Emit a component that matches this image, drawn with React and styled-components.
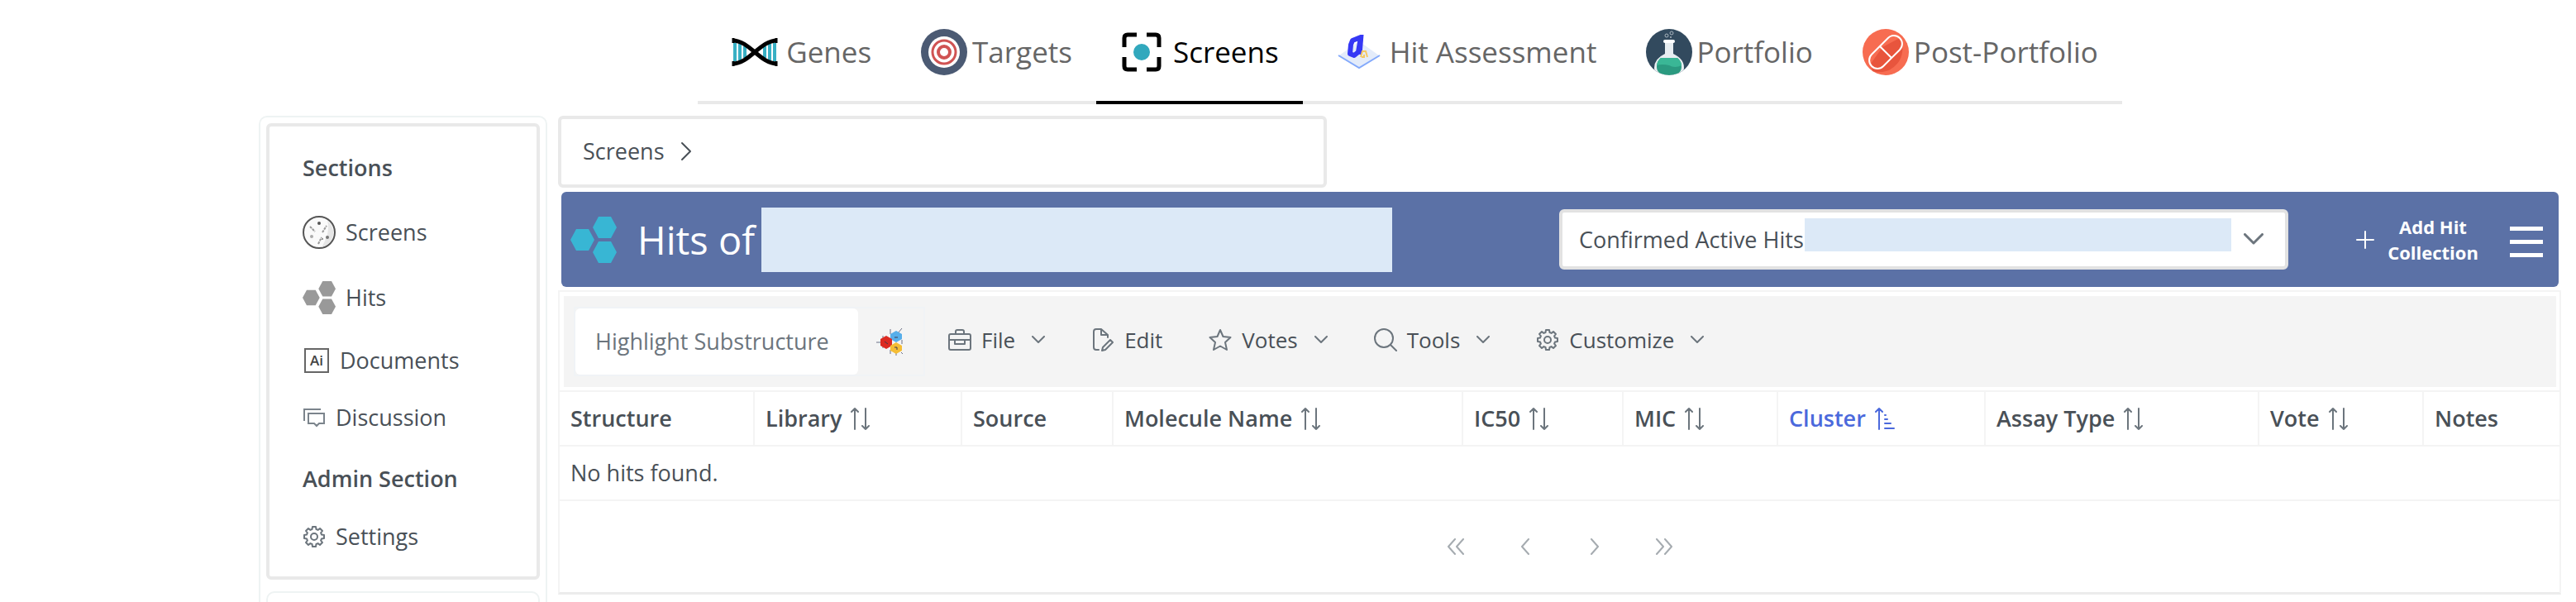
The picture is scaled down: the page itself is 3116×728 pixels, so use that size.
import React from "react";
import styled, { createGlobalStyle } from "styled-components";

const GlobalStyle = createGlobalStyle`
  * { box-sizing: border-box; }
  body {
    margin: 0;
    background: #fff;
    color: #495057;
    font-family: "Open Sans", "Noto Sans", sans-serif;
    font-size: 27px;
    line-height: 40px;
  }
  button, input, select { font: inherit; color: inherit; }
`;

const Page = styled.div`
  display: flex;
  flex-direction: column;
  min-height: 100vh;
  padding: 0 18px 0 313px;
`;

const TabBar = styled.nav`
  display: flex;
  justify-content: center;
  margin-bottom: 14px;
`;

const Tab = styled.a`
  display: flex;
  align-items: center;
  height: 126px;
  padding: 4px 29px 0 31px;
  border-bottom: 4px solid ${(p) => (p.$active ? "#000" : "#e9e9e9")};
  color: ${(p) => (p.$active ? "#000" : "#666")};
  font-size: 35px;
  line-height: 48px;
  text-decoration: none;
  white-space: nowrap;
`;

const TabIcon = styled.span`
  display: flex;
  justify-content: ${(p) => (p.$center ? "center" : "flex-start")};
  width: ${(p) => p.$width}px;
`;

const Body = styled.div`
  display: flex;
  flex: 1;
  align-items: stretch;
  gap: 13px;
`;

const Sidebar = styled.aside`
  display: flex;
  flex: none;
  flex-direction: column;
  gap: 14px;
  width: 349px;
  padding: 7px 7px 0;
  border: 2px solid #eef3f3;
  border-bottom: 0;
  border-radius: 10px 10px 0 0;
`;

const MenuCard = styled.div`
  display: flex;
  flex-direction: column;
  gap: 4px;
  padding: 12px 40px 16px;
  border: 4px solid #e9e9e9;
  border-radius: 6px;
`;

const MenuGroup = styled.section``;

const NextCard = styled.div`
  flex: 1;
  min-height: 12px;
  border: 2px solid #eef3f3;
  border-bottom: 0;
  border-radius: 10px 10px 0 0;
`;

const MenuHeading = styled.h2`
  display: flex;
  align-items: center;
  height: 76px;
  margin: 0;
  font-size: 27px;
  font-weight: 600;
`;

const rowHeights = { large: 79, medium: 74, small: 64 };

const MenuLink = styled.a`
  display: flex;
  align-items: center;
  gap: 12px;
  height: ${(p) => rowHeights[p.$size]}px;
  color: inherit;
  text-decoration: none;
`;

const Main = styled.main`
  flex: 1;
  min-width: 0;
`;

const Breadcrumb = styled.nav`
  display: flex;
  align-items: center;
  gap: 18px;
  width: 100%;
  max-width: 930px;
  height: 87px;
  padding: 0 26px 2px;
  border: 4px solid #e9e9e9;
  border-radius: 6px;
`;

const CrumbLink = styled.a`
  color: inherit;
  text-decoration: none;
`;

const TitleBar = styled.header`
  display: flex;
  align-items: center;
  height: 115px;
  margin: 5px 3px 4px 4px;
  padding: 0 19px 0 11px;
  border-radius: 6px;
  background: #5b71a6;
  color: #fff;
`;

const Title = styled.h1`
  flex: 1;
  display: flex;
  align-items: center;
  gap: 8px;
  margin: 0 0 0 25px;
  font-size: 47px;
  font-weight: 400;
  line-height: 64px;
  white-space: nowrap;
`;

const TitleValue = styled.span`
  width: 763px;
  height: 78px;
  background: #dce9f7;
`;

const SelectBox = styled.div`
  position: relative;
  width: 882px;
  height: 73px;
`;

const Select = styled.select`
  width: 100%;
  height: 100%;
  padding: 0 20px;
  border: 4px solid #e2e2e2;
  border-radius: 6px;
  background: #fff;
  color: #495057;
  appearance: none;
`;

const SelectValue = styled.span`
  position: absolute;
  top: 11px;
  right: 69px;
  width: 516px;
  height: 40px;
  background: #dce9f7;
  pointer-events: none;
`;

const SelectArrow = styled.span`
  position: absolute;
  top: 0;
  right: 30px;
  display: flex;
  align-items: center;
  height: 100%;
  color: #6c757d;
  pointer-events: none;
`;

const AddButton = styled.button`
  display: flex;
  align-items: center;
  gap: 16px;
  margin: 0 38px 0 82px;
  padding: 0;
  border: 0;
  background: none;
  color: #fff;
  font-size: 22px;
  font-weight: 700;
  line-height: 31px;
`;

const AddLabel = styled.span`
  width: 110px;
  text-align: center;
`;

const MenuButton = styled.button`
  display: flex;
  padding: 0;
  border: 0;
  background: none;
  color: #fff;
`;

const Panel = styled.section`
  border: 2px solid #f4f4f4;
  border-bottom: 3px solid #ececec;
`;

const Toolbar = styled.div`
  display: flex;
  align-items: center;
  height: 110px;
  margin: 5px 4px 4px 5px;
  padding: 0 12px;
  background: #f4f4f4;
`;

const SearchGroup = styled.div`
  display: flex;
  align-items: stretch;
  height: 84px;
  border: 2px solid #f0f3f6;
`;

const SearchInput = styled.input`
  width: 342px;
  padding: 0 24px;
  border: 0;
  border-radius: 6px;
  background: #fff;
  &::placeholder { color: #6c757d; opacity: 1; }
`;

const StructureButton = styled.button`
  display: flex;
  align-items: center;
  justify-content: center;
  width: 79px;
  padding: 0 4px 0 0;
  border: 0;
  background: none;
`;

const ToolButton = styled.button`
  display: flex;
  align-items: center;
  gap: 12px;
  padding: 0 28px 4px;
  border: 0;
  background: none;
  font-size: 26px;
  svg { color: #6c757d; }
`;

const ToolArrow = styled.span`
  display: flex;
  padding-left: 8px;
`;

const Table = styled.table`
  width: 100%;
  table-layout: fixed;
  border-collapse: separate;
  border-spacing: 0;
`;

const HeadCell = styled.th`
  width: ${(p) => p.$width}px;
  height: 68px;
  padding: 0 13px;
  border-top: 2px solid #f4f4f4;
  border-bottom: 2px solid #f4f4f4;
  border-right: ${(p) => (p.$last ? 0 : 2)}px solid #f4f4f4;
  color: ${(p) => (p.$sorted ? "#4b69dc" : "#495057")};
  font-weight: 600;
  text-align: left;
  white-space: nowrap;
`;

const HeadLabel = styled.span`
  display: flex;
  align-items: center;
  gap: 8px;
  svg { color: ${(p) => (p.$sorted ? "#4b69dc" : "#6c757d")}; }
`;

const EmptyCell = styled.td`
  height: 66px;
  padding: 0 13px;
  border-bottom: 2px solid #f4f4f4;
`;

const Paginator = styled.div`
  display: flex;
  align-items: center;
  justify-content: center;
  height: 110px;
`;

const PageButton = styled.button`
  display: flex;
  align-items: center;
  justify-content: center;
  width: 84px;
  height: 84px;
  padding: 0;
  border: 0;
  background: none;
  color: #a5abb0;
`;

const Line = ({ w, h, box, sw = 2, children }) => (
  <svg width={w} height={h} viewBox={box || `0 0 ${w} ${h}`} fill="none" stroke="currentColor" strokeWidth={sw} strokeLinecap="round" strokeLinejoin="round" aria-hidden="true">
    {children}
  </svg>
);

const GenesIcon = () => (
  <svg width="56" height="36" viewBox="0 0 56 36" fill="none" aria-hidden="true">
    <path d="M4 7V29M10 8V28M16 11V25M40 11V25M46 8V28M52 7V29" stroke="#38b0c4" strokeWidth="4" />
    <path d="M1 4C22 4 34 32 55 32M1 32C22 32 34 4 55 4" stroke="#000" strokeWidth="5" />
    <path d="M2 1V7M54 1V7M2 29V35M54 29V35" stroke="#000" strokeWidth="3" />
  </svg>
);

const TargetsIcon = () => (
  <svg width="56" height="56" viewBox="0 0 56 56" fill="none" aria-hidden="true">
    <circle cx="28" cy="28" r="28" fill="#4b5a73" />
    <circle cx="28" cy="28" r="19" fill="#fff" />
    <circle cx="28" cy="28" r="14" stroke="#d05353" strokeWidth="3" />
    <circle cx="28" cy="28" r="7" stroke="#d05353" strokeWidth="4" />
  </svg>
);

const ScreensIcon = () => (
  <svg width="48" height="48" viewBox="0 0 48 48" fill="none" aria-hidden="true">
    <path d="M3 18V7Q3 3 7 3H18M30 3H41Q45 3 45 7V18M45 30V41Q45 45 41 45H30M18 45H7Q3 45 3 41V30" stroke="#000" strokeWidth="5" />
    <circle cx="24" cy="24" r="10" fill="#31a8bd" />
  </svg>
);

const HitIcon = () => (
  <svg width="52" height="42" viewBox="0 0 52 42" fill="none" aria-hidden="true">
    <path d="M26 8L50 25L26 39L2 25Z" fill="#e4ecfa" />
    <path d="M1 25L26 40L51 25" stroke="#83a9fb" strokeWidth="2" />
    <path d="M18 7L28 3L25 21L20 25L15 23L16 12Z" stroke="#3538f5" strokeWidth="6" strokeLinejoin="round" />
    <path d="M30 0L28 24" stroke="#3538f5" strokeWidth="3" />
    <path d="M28 27L30 20H34L36 27M29 27H32V24" stroke="#f6c863" strokeWidth="2" />
  </svg>
);

const PortfolioIcon = () => (
  <svg width="56" height="56" viewBox="0 0 56 56" fill="none" aria-hidden="true">
    <clipPath id="flask-disc"><circle cx="28" cy="28" r="28" /></clipPath>
    <g clipPath="url(#flask-disc)">
      <rect width="56" height="56" fill="#324a5e" />
      <path d="M23 15H33V30Q46 36 46 47Q46 53 42 57H14Q10 53 10 47Q10 36 23 30Z" fill="#e7edf0" />
      <path d="M18 35H38Q43 39 43 46Q43 56 28 56Q13 56 13 46Q13 39 18 35Z" fill="#2b9a80" />
      <path d="M18 35H38Q43 39 43 44Q35 48 28 44Q20 42 13 44Q14 38 18 35Z" fill="#3ab796" />
      <rect x="21" y="13" width="14" height="4" rx="2" fill="#fff" />
      <circle cx="25" cy="8" r="2" stroke="#a9b5bd" />
      <circle cx="31" cy="5" r="2" stroke="#a9b5bd" />
      <circle cx="30" cy="10" r="1" fill="#a9b5bd" />
    </g>
  </svg>
);

const PillIcon = () => (
  <svg width="56" height="56" viewBox="0 0 56 56" fill="none" aria-hidden="true">
    <circle cx="28" cy="28" r="28" fill="#f76c51" />
    <path d="M45 11A28 28 0 0 1 12 51L10 42L24 22Z" fill="#e8553d" />
    <g transform="rotate(45 28 28)" stroke="#fff" strokeWidth="2">
      <rect x="18" y="4" width="20" height="48" rx="10" />
      <path d="M18 28H38" />
    </g>
  </svg>
);

const HexIcon = ({ size, color }) => (
  <svg width={size} height={size} viewBox="0 0 56 56" fill={color} aria-hidden="true">
    <path d="M7 15H22L29 28L22 41H7L0 28Z" />
    <path d="M34 0H49L56 13L49 26H34L27 13Z" />
    <path d="M34 30H49L56 43L49 56H34L27 43Z" />
  </svg>
);

const PlateIcon = () => (
  <svg width="40" height="40" viewBox="0 0 40 40" fill="none" stroke="#555" aria-hidden="true">
    <circle cx="20" cy="20" r="19" fill="#fafafa" strokeWidth="2" />
    <path d="M23 38A18 18 0 0 0 30 6Q34 20 23 38Z" fill="#e6e6e6" stroke="none" />
    <path d="M9 13L15 19M24 20L29 12M19 34L23 26" stroke="#999" strokeWidth="2" strokeDasharray="3 1" />
    <circle cx="20" cy="9" r="2" fill="#555" stroke="none" />
    <circle cx="11" cy="25" r="2" fill="#aaa" stroke="none" />
    <circle cx="30" cy="26" r="2" fill="#777" stroke="none" />
    <circle cx="24" cy="28" r="1" fill="#777" stroke="none" />
  </svg>
);

const DocIcon = () => (
  <svg width="33" height="30" viewBox="0 0 33 30" aria-hidden="true">
    <rect x="3" y="1" width="28" height="28" fill="#fff" stroke="#666" strokeWidth="2" />
    <text x="17" y="21" textAnchor="middle" fontFamily="Open Sans" fontSize="17" fontWeight="600" fill="#444">Ai</text>
  </svg>
);

const ChatIcon = () => (
  <svg width="28" height="26" viewBox="0 0 28 26" fill="none" stroke="#7b848c" strokeWidth="2" aria-hidden="true">
    <path d="M2 17V3H22" />
    <path d="M7 8H26V20H20L17 23L14 20H7Z" />
  </svg>
);

const GearIcon = () => (
  <svg width="28" height="28" viewBox="0 0 28 28" fill="none" stroke="#6c757d" strokeWidth="2" strokeLinejoin="round" aria-hidden="true">
    <path d="M11.5 5L12 2H16L16.5 5L18.6 5.9L21 4L24 7L22.1 9.4L23 11.5L26 12V16L23 16.5L22.1 18.6L24 21L21 24L18.6 22.1L16.5 23L16 26H12L11.5 23L9.4 22.1L7 24L4 21L5.9 18.6L5 16.5L2 16V12L5 11.5L5.9 9.4L4 7L7 4L9.4 5.9Z" />
    <circle cx="14" cy="14" r="4" />
  </svg>
);

const MoleculeIcon = () => (
  <svg width="32" height="34" viewBox="0 0 32 34" aria-hidden="true">
    <path d="M0 18H6M8 10V25M26 7L31 1M17 2V8M31 15V20M24 30V34M17 27V32M30 30L32 32" stroke="#6b6f86" strokeWidth="1" />
    <path d="M24 4L31 8V14L24 18L17 14V8Z" fill="#56aeea" />
    <path d="M12 10L19 14V22L12 26L5 22V14Z" fill="#dc2a22" />
    <path d="M24 18L31 22V28L24 32L17 28V22Z" fill="#f5bd35" />
    <path d="M22 12H26M10 17L14 20M22 24H25V27" stroke="#3a3a50" fill="none" />
  </svg>
);

const CaseIcon = () => (
  <Line w={28} h={28}>
    <rect x="1" y="7" width="26" height="19" rx="2" />
    <path d="M9 7V4Q9 2 11 2H17Q19 2 19 4V7M1 14H27M8 15V19H20V15" />
  </Line>
);

const EditIcon = () => (
  <Line w={28} h={28}>
    <path d="M9 26H6Q3 26 3 23V4Q3 1 6 1H12L20 8V11M12 1V8H20" />
    <path d="M23 14L26 17L17 26L13 27L14 23Z" />
  </Line>
);

const StarIcon = () => (
  <Line w={28} h={28}>
    <path d="M14 2L17.5 10L26.5 11L20 17L22 26L14 21.5L6 26L8 17L1.5 11L10.5 10Z" />
  </Line>
);

const SearchIcon = () => (
  <Line w={28} h={28}>
    <circle cx="12" cy="12" r="11" />
    <path d="M20 20L27 27" />
  </Line>
);

const Down = ({ w = 16, h = 10, sw }) => (
  <Line w={w} h={h} sw={sw} box="0 0 16 10"><path d="M1 1L8 8L15 1" /></Line>
);

const SortIcon = () => (
  <Line w={28} h={28}>
    <path d="M8 27V2M4 6L8 2L12 6M21 2V27M17 23L21 27L25 23" />
  </Line>
);

const SortedIcon = () => (
  <Line w={28} h={28}>
    <path d="M8 27V2M4 6L8 2L12 6M15 10H16M15 15H18M15 20H22M15 26H26" />
  </Line>
);

const tabs = [
  { label: "Genes", icon: <GenesIcon />, width: 76, center: true },
  { label: "Targets", icon: <TargetsIcon />, width: 62 },
  { label: "Screens", icon: <ScreensIcon />, width: 62, active: true },
  { label: "Hit Assessment", icon: <HitIcon />, width: 74, center: true },
  { label: "Portfolio", icon: <PortfolioIcon />, width: 61 },
  { label: "Post-Portfolio", icon: <PillIcon />, width: 62 },
];

const sections = [
  { label: "Screens", icon: <PlateIcon />, size: "large" },
  { label: "Hits", icon: <HexIcon size={40} color="#999" />, size: "large" },
  { label: "Documents", icon: <DocIcon />, size: "medium" },
  { label: "Discussion", icon: <ChatIcon />, size: "small" },
];

const tools = [
  { label: "File", icon: <CaseIcon />, menu: true },
  { label: "Edit", icon: <EditIcon /> },
  { label: "Votes", icon: <StarIcon />, menu: true },
  { label: "Tools", icon: <SearchIcon />, menu: true },
  { label: "Customize", icon: <GearIcon />, menu: true },
];

const columns = [
  { label: "Structure", width: 236 },
  { label: "Library", width: 251, sort: true },
  { label: "Source", width: 183 },
  { label: "Molecule Name", width: 423, sort: true },
  { label: "IC50", width: 194, sort: true },
  { label: "MIC", width: 187, sort: true },
  { label: "Cluster", width: 251, sort: true, sorted: true },
  { label: "Assay Type", width: 331, sort: true },
  { label: "Vote", width: 199, sort: true },
  { label: "Notes", width: 164 },
];

const pages = [
  { label: "First page", w: 22, d: "M10 1L2 10L10 19M20 1L12 10L20 19" },
  { label: "Previous page", w: 12, d: "M10 1L2 10L10 19" },
  { label: "Next page", w: 12, d: "M2 1L10 10L2 19" },
  { label: "Last page", w: 22, d: "M2 1L10 10L2 19M12 1L20 10L12 19" },
];

export default function App() {
  return (
    <>
      <GlobalStyle />
      <Page>
        <TabBar>
          {tabs.map((t) => (
            <Tab key={t.label} href="#" $active={t.active}>
              <TabIcon $width={t.width} $center={t.center}>{t.icon}</TabIcon>
              {t.label}
            </Tab>
          ))}
        </TabBar>
        <Body>
          <Sidebar>
            <MenuCard>
              <MenuGroup>
                <MenuHeading>Sections</MenuHeading>
                {sections.map((s) => (
                  <MenuLink key={s.label} href="#" $size={s.size}>{s.icon}{s.label}</MenuLink>
                ))}
              </MenuGroup>
              <MenuGroup>
                <MenuHeading>Admin Section</MenuHeading>
                <MenuLink href="#" $size="small"><GearIcon />Settings</MenuLink>
              </MenuGroup>
            </MenuCard>
            <NextCard />
          </Sidebar>
          <Main>
            <Breadcrumb>
              <CrumbLink href="#">Screens</CrumbLink>
              <Line w={16} h={24}><path d="M3 2L13 12L3 22" /></Line>
            </Breadcrumb>
            <TitleBar>
              <HexIcon size={56} color="#38b6d4" />
              <Title>Hits of <TitleValue /></Title>
              <SelectBox>
                <Select aria-label="Hit collection">
                  <option>Confirmed Active Hits</option>
                </Select>
                <SelectValue />
                <SelectArrow><Down w={24} h={15} /></SelectArrow>
              </SelectBox>
              <AddButton>
                <Line w={22} h={22}><path d="M11 1V21M1 11H21" /></Line>
                <AddLabel>Add Hit Collection</AddLabel>
              </AddButton>
              <MenuButton aria-label="Menu">
                <svg width="40" height="48" viewBox="0 0 40 48" fill="currentColor" aria-hidden="true">
                  <path d="M0 8H40V13H0ZM0 24H40V29H0ZM0 40H40V45H0Z" />
                </svg>
              </MenuButton>
            </TitleBar>
            <Panel>
              <Toolbar>
                <SearchGroup>
                  <SearchInput aria-label="Highlight Substructure" placeholder="Highlight Substructure" />
                  <StructureButton aria-label="Draw structure"><MoleculeIcon /></StructureButton>
                </SearchGroup>
                {tools.map((t) => (
                  <ToolButton key={t.label}>
                    {t.icon}
                    {t.label}
                    {t.menu && <ToolArrow><Down /></ToolArrow>}
                  </ToolButton>
                ))}
              </Toolbar>
              <Table>
                <thead>
                  <tr>
                    {columns.map((c, i) => (
                      <HeadCell key={c.label} $width={c.width} $sorted={c.sorted} $last={i === columns.length - 1}>
                        <HeadLabel $sorted={c.sorted}>
                          {c.label}
                          {c.sort && (c.sorted ? <SortedIcon /> : <SortIcon />)}
                        </HeadLabel>
                      </HeadCell>
                    ))}
                  </tr>
                </thead>
                <tbody>
                  <tr><EmptyCell colSpan={columns.length}>No hits found.</EmptyCell></tr>
                </tbody>
              </Table>
              <Paginator>
                {pages.map((p) => (
                  <PageButton key={p.label} aria-label={p.label}>
                    <Line w={p.w} h={20}><path d={p.d} /></Line>
                  </PageButton>
                ))}
              </Paginator>
            </Panel>
          </Main>
        </Body>
      </Page>
    </>
  );
}
